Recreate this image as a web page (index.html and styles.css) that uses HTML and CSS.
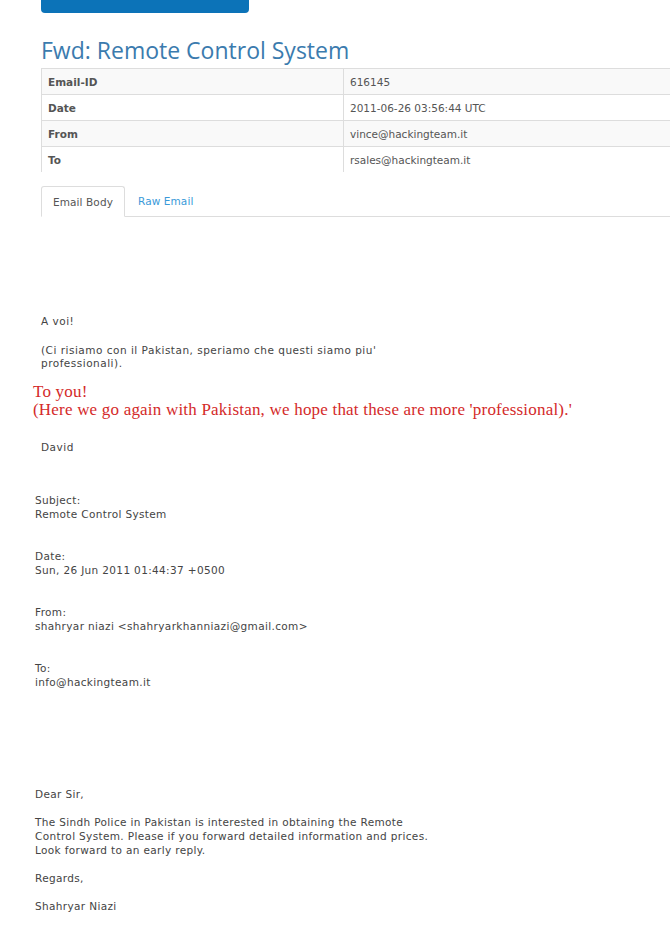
FILE: index.html
```html
<!DOCTYPE html>
<html>
<head>
<meta charset="utf-8">
<link rel="stylesheet" href="styles.css">
</head>
<body>
<div class="page">
  <div class="topbar"></div>
  <h1 class="title">Fwd: Remote Control System</h1>
  <table class="meta">
    <tr class="odd"><th>Email-ID</th><td>616145</td></tr>
    <tr><th>Date</th><td>2011-06-26 03:56:44 UTC</td></tr>
    <tr class="odd"><th>From</th><td>vince@hackingteam.it</td></tr>
    <tr><th>To</th><td>rsales@hackingteam.it</td></tr>
  </table>
  <div class="tabs">
    <div class="tab active">Email Body</div>
    <div class="tab link">Raw Email</div>
  </div>
  <div class="body">
    <p class="p1">A voi!</p>
    <p class="p2">(Ci risiamo con il Pakistan, speriamo che questi siamo piu'<br>professionali).</p>
    <p class="trans">To you!<br>(Here we go again with Pakistan, we hope that these are more 'professional).'</p>
    <p class="sig">David</p>
    <div class="fwd">
      <p class="field first">Subject:<br>Remote Control System</p>
      <p class="field">Date:<br>Sun, 26 Jun 2011 01:44:37 +0500</p>
      <p class="field">From:<br>shahryar niazi &lt;shahryarkhanniazi@gmail.com&gt;</p>
      <p class="field">To:<br>info@hackingteam.it</p>
      <p class="dear">Dear Sir,</p>
      <p class="para">The Sindh Police in Pakistan is interested in obtaining the Remote<br>Control System. Please if you forward detailed information and prices.<br>Look forward to an early reply.</p>
      <p class="para">Regards,</p>
      <p class="para">Shahryar Niazi</p>
    </div>
  </div>
</div>
</body>
</html>
```
FILE: styles.css
```css
html, body {
  margin: 0;
  padding: 0;
  background: #fff;
  overflow: hidden;
}
.page {
  padding-left: 41px;
  font-family: "DejaVu Sans", Verdana, sans-serif;
  color: #444;
}
.topbar {
  width: 208px;
  height: 13px;
  background: #0c73b8;
  border-radius: 0 0 4px 4px;
}
.title {
  margin: 22px 0 0 0;
  font-family: "Open Sans", sans-serif;
  font-weight: 400;
  font-size: 23px;
  line-height: 30px;
  color: #3b7bae;
  height: 33px;
}
.meta {
  border-collapse: collapse;
  width: 640px;
  font-size: 10.5px;
  border-top: 1px solid #ddd;
}
.meta th, .meta td {
  height: 25px;
  padding: 0 0 0 6px;
  text-align: left;
  border-bottom: 1px solid #ddd;
  vertical-align: middle;
}
.meta tr:last-child th, .meta tr:last-child td { border-bottom: none; }
.meta th {
  width: 295px;
  font-weight: bold;
  color: #555;
  border-left: 1px solid #ddd;
  border-right: 1px solid #ddd;
}
.meta td { color: #555; }
.meta tr.odd { background: #f9f9f9; }
.tabs {
  display: flex;
  margin-top: 14px;
  border-bottom: 1px solid #ddd;
  height: 30px;
}
.tab {
  font-size: 10.5px;
  line-height: 30px;
  padding: 0 11px;
  letter-spacing: 0.1px;
}
.tab.active {
  border: 1px solid #ddd;
  border-bottom: 1px solid #fff;
  border-radius: 3px 3px 0 0;
  margin-bottom: -1px;
  color: #555;
  background: #fff;
}
.tab.link {
  color: #3a9ad9;
  padding-left: 13px;
}
.body {
  font-size: 10.5px;
  letter-spacing: 0.5px;
  line-height: 13px;
  color: #444;
}
.body p { margin: 0; }
.body .p1 { margin-top: 98px; }
.body .p2 { margin-top: 16px; }
.body .trans {
  margin: 13px 0 0 -8px;
  font-family: "Liberation Serif", "Times New Roman", serif;
  font-size: 17px;
  letter-spacing: 0.2px;
  line-height: 18px;
  color: #d42a2a;
}
.body .sig { margin-top: 22px; }
.fwd { margin-left: -6px; letter-spacing: 0.35px; }
.body .field { margin-top: 28px; line-height: 14px; }
.body .field.first { margin-top: 39px; }
.body .dear { margin-top: 99px; }
.body .para { margin-top: 14px; line-height: 14px; }
```
